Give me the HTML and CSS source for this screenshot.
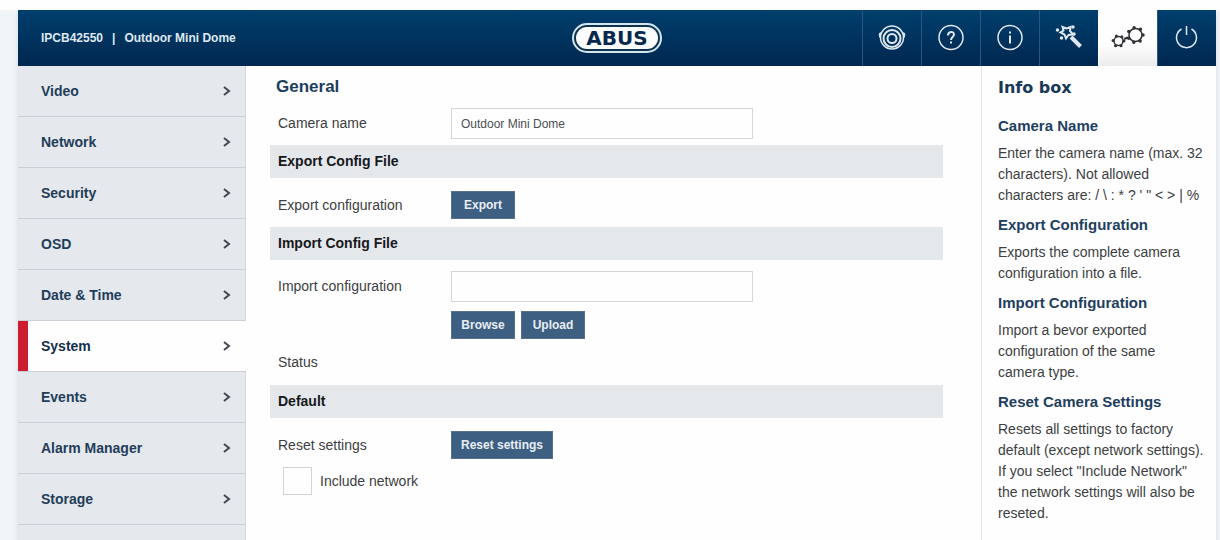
FILE: index.html
```html
<!DOCTYPE html>
<html lang="en">
<head>
    <meta charset="UTF-8">
    <meta name="viewport" content="width=device-width, initial-scale=1.0">
    <title>IPCB42550 | Outdoor Mini Dome</title>
    <link rel="stylesheet" href="styles.css">
</head>
<body>
    <div class="page">
        <header class="topbar">
            <p class="device"><span>IPCB42550</span><span>|</span><span>Outdoor Mini Dome</span></p>
            <div class="logo"><span>ABUS</span></div>
            <nav class="tools">
                <a href="#live" aria-label="Live view">
                    <svg width="30" height="30" viewBox="0 0 30 30">
                        <circle cx="15" cy="14.500" r="11.500"/>
                        <circle cx="15" cy="15.500" r="8.500" stroke-width="2"/>
                        <circle cx="15" cy="15.500" r="4.500" stroke-width="2"/>
                        <path d="M4 10c-2 0-2 4 0 5M26 10c2 0 2 4 0 5"/>
                    </svg>
                </a>
                <a href="#help" aria-label="Help">
                    <svg width="30" height="30" viewBox="0 0 30 30">
                        <circle cx="15" cy="14.500" r="12"/>
                        <path d="M12 12.500c0-4.500 6-4.500 6-1 0 2.500-3 2.500-3 5.500M15 18.500v2" stroke-width="2"/>
                    </svg>
                </a>
                <a href="#info" aria-label="Information">
                    <svg width="30" height="30" viewBox="0 0 30 30">
                        <circle cx="15" cy="14.500" r="12"/>
                        <path d="M15 8.500v2M15 12.500v8" stroke-width="2"/>
                    </svg>
                </a>
                <a href="#wizard" aria-label="Wizard">
                    <svg width="30" height="30" viewBox="0 0 30 30">
                        <path d="M17 14l9.500 9.500" stroke-width="4"/>
                        <path d="M8.500 4l4 1.500 4-1.500-0.500 4 3 3.500-4.500 0.500-2.500 3.500-1.500-4-4-2 3-2z" stroke-width="2"/>
                        <path d="M3.500 7h0M7.500 15h0M19 4h0M20 11h0" stroke-width="3.500" stroke-linecap="round"/>
                    </svg>
                </a>
                <a href="#settings" class="active" aria-label="Settings">
                    <svg width="36" height="30" viewBox="0 0 36 30">
                        <circle cx="8.500" cy="18" r="4.500"/>
                        <circle cx="8.500" cy="18" r="5.500" stroke-width="3" stroke-linecap="round" stroke-dasharray="0 5.760"/>
                        <circle cx="25.500" cy="12" r="6.500"/>
                        <circle cx="25.500" cy="12" r="7.500" stroke-width="3.500" stroke-linecap="round" stroke-dasharray="0 6.732"/>
                        <path d="M14 16l4-1.500" stroke-width="2"/>
                    </svg>
                </a>
                <a href="#logout" aria-label="Log out">
                    <svg width="30" height="30" viewBox="0 0 30 30">
                        <path d="M9.500 6a10 10 0 1 0 10 0M14.500 3v9"/>
                    </svg>
                </a>
            </nav>
        </header>

        <div class="columns">
            <nav class="menu">
                <a href="#video">Video<svg class="arrow" width="8" height="10" viewBox="0 0 8 10"><path d="M1 1l5 4-5 4"/></svg></a>
                <a href="#network">Network<svg class="arrow" width="8" height="10" viewBox="0 0 8 10"><path d="M1 1l5 4-5 4"/></svg></a>
                <a href="#security">Security<svg class="arrow" width="8" height="10" viewBox="0 0 8 10"><path d="M1 1l5 4-5 4"/></svg></a>
                <a href="#osd">OSD<svg class="arrow" width="8" height="10" viewBox="0 0 8 10"><path d="M1 1l5 4-5 4"/></svg></a>
                <a href="#date">Date &amp; Time<svg class="arrow" width="8" height="10" viewBox="0 0 8 10"><path d="M1 1l5 4-5 4"/></svg></a>
                <a href="#system" class="active">System<svg class="arrow" width="8" height="10" viewBox="0 0 8 10"><path d="M1 1l5 4-5 4"/></svg></a>
                <a href="#events">Events<svg class="arrow" width="8" height="10" viewBox="0 0 8 10"><path d="M1 1l5 4-5 4"/></svg></a>
                <a href="#alarm">Alarm Manager<svg class="arrow" width="8" height="10" viewBox="0 0 8 10"><path d="M1 1l5 4-5 4"/></svg></a>
                <a href="#storage">Storage<svg class="arrow" width="8" height="10" viewBox="0 0 8 10"><path d="M1 1l5 4-5 4"/></svg></a>
            </nav>

            <main class="content">
                <h1>General</h1>
                <form>
                    <div class="row name-row">
                        <label for="camera-name">Camera name</label>
                        <input type="text" id="camera-name" value="Outdoor Mini Dome">
                    </div>

                    <h2>Export Config File</h2>
                    <div class="row">
                        <span>Export configuration</span>
                        <button type="button">Export</button>
                    </div>

                    <h2>Import Config File</h2>
                    <div class="row import-row">
                        <label for="import-file">Import configuration</label>
                        <input type="text" id="import-file">
                        <div class="buttons">
                            <button type="button">Browse</button>
                            <button type="button">Upload</button>
                        </div>
                    </div>
                    <p class="status">Status</p>

                    <h2>Default</h2>
                    <div class="row">
                        <span>Reset settings</span>
                        <button type="button">Reset settings</button>
                    </div>
                    <div class="check">
                        <input type="checkbox" id="include-network">
                        <label for="include-network">Include network</label>
                    </div>
                </form>
            </main>

            <aside class="info">
                <h2>Info box</h2>
                <h3>Camera Name</h3>
                <p>Enter the camera name (max. 32 characters). Not allowed characters are: / \ : * ? ' " &lt; &gt; | %</p>
                <h3>Export Configuration</h3>
                <p>Exports the complete camera configuration into a file.</p>
                <h3>Import Configuration</h3>
                <p>Import a bevor exported configuration of the same camera type.</p>
                <h3>Reset Camera Settings</h3>
                <p>Resets all settings to factory default (except network settings). If you select "Include Network" the network settings will also be reseted.</p>
            </aside>
        </div>
    </div>
</body>
</html>
```
FILE: styles.css
```css
* {
    box-sizing: border-box;
}

body {
    margin: 0;
    border-top: 10px solid #fefefe;
    background-color: #f1f5f8;
    color: #3c3e42;
    font-family: "Liberation Sans", Arial, sans-serif;
    font-size: 14px;
    line-height: 21px;
}

h1, h2, h3, p {
    margin: 0;
}

a {
    color: inherit;
    text-decoration: none;
}

svg {
    fill: none;
    stroke: currentColor;
    stroke-width: 1.5;
}

.page {
    display: flex;
    flex-direction: column;
    min-height: calc(100vh - 10px);
    margin: 0 4px 0 18px;
    background-color: #fefefe;
    box-shadow: 0 4px 5px #d3d9de;
}

/* top bar */
.topbar {
    display: grid;
    grid-template-columns: 1fr auto 1fr;
    align-items: center;
    height: 56px;
    background: linear-gradient(#003f6e, #00274f);
    color: #dfe8f0;
}

.device {
    display: flex;
    gap: 9px;
    padding-left: 23px;
    font-size: 12px;
    font-weight: bold;
}

.logo {
    padding: 2px;
    border: 2px solid #d5e5ee;
    border-radius: 15px;
    background-color: #0d3350;
}

.logo span {
    display: block;
    padding: 0 10px;
    border-radius: 11px;
    background-color: #fafcfd;
    color: #08294d;
    font-family: "DejaVu Sans", Verdana, sans-serif;
    font-size: 20px;
    font-weight: bold;
    line-height: 22px;
}

.tools {
    display: flex;
    justify-content: flex-end;
    align-self: stretch;
}

.tools a {
    display: flex;
    align-items: center;
    justify-content: center;
    width: 59px;
    border-left: 1px solid #2a5680;
}

.tools .active {
    border-color: #fefefe;
    background: linear-gradient(#fefefe 60%, #ececee);
    color: #303238;
}

.columns {
    display: flex;
    flex: 1;
}

/* left menu */
.menu {
    flex: none;
    width: 228px;
    border-right: 1px solid #d3d7dc;
    background-color: #e5e8ec;
    color: #1f3d59;
    font-weight: bold;
}

.menu a {
    display: flex;
    align-items: center;
    justify-content: space-between;
    height: 51px;
    padding: 0 14px 0 23px;
    border-bottom: 1px solid #cbd0d6;
}

.menu .active {
    margin-right: -1px;
    padding: 0 15px 0 23px;
    background: linear-gradient(to right, #cd1b30 10px, #fefefe 10px);
    color: #14304d;
}

.arrow {
    color: #44494f;
    stroke-width: 2;
}

/* settings form */
.content {
    flex: 1;
    padding: 11px 38px 11px 24px;
}

.content h1 {
    padding-left: 6px;
    color: #1b3e5f;
    font-size: 17px;
    line-height: 20px;
}

.content h2 {
    padding-left: 8px;
    background-color: #e5e8eb;
    color: #16181c;
    font-size: 14px;
    line-height: 33px;
}

.row {
    display: grid;
    grid-template-columns: 173px 302px;
    align-items: center;
    justify-items: start;
    padding: 13px 0 8px 8px;
}

.name-row {
    padding: 11px 0 6px 8px;
}

.import-row {
    row-gap: 9px;
    padding-top: 11px;
    padding-bottom: 0;
}

input[type="text"] {
    width: 100%;
    height: 31px;
    padding: 0 9px;
    border: 1px solid #d4d6d9;
    background-color: #fefefe;
    color: #4b4e53;
    font-family: inherit;
    font-size: 12px;
}

.buttons {
    display: flex;
    grid-column: 2;
    gap: 6px;
}

button {
    min-width: 64px;
    height: 28px;
    padding: 0 9px;
    border: 1px solid #57718b;
    background-color: #3d5f82;
    color: #e8eef4;
    font-family: inherit;
    font-size: 12px;
    font-weight: bold;
}

.status {
    padding: 13px 8px 12px;
}

.check {
    display: flex;
    align-items: center;
    gap: 8px;
    padding-left: 13px;
}

.check input {
    appearance: none;
    width: 29px;
    height: 28px;
    margin: 0;
    border: 1px solid #d0d3d7;
    background-color: #fefefe;
}

.check input:checked {
    background-color: #3d5f82;
}

/* help texts */
.info {
    flex: none;
    width: 235px;
    padding: 11px 12px 11px 16px;
    border-left: 1px solid #e3e5e8;
}

.info h2 {
    margin-bottom: 17px;
    color: #173857;
    font-family: "DejaVu Sans", Verdana, sans-serif;
    font-size: 16px;
    line-height: 21px;
}

.info h3 {
    color: #1e4060;
    font-size: 15px;
    line-height: 21px;
}

.info p {
    margin: 7px 0 8px;
}
```
